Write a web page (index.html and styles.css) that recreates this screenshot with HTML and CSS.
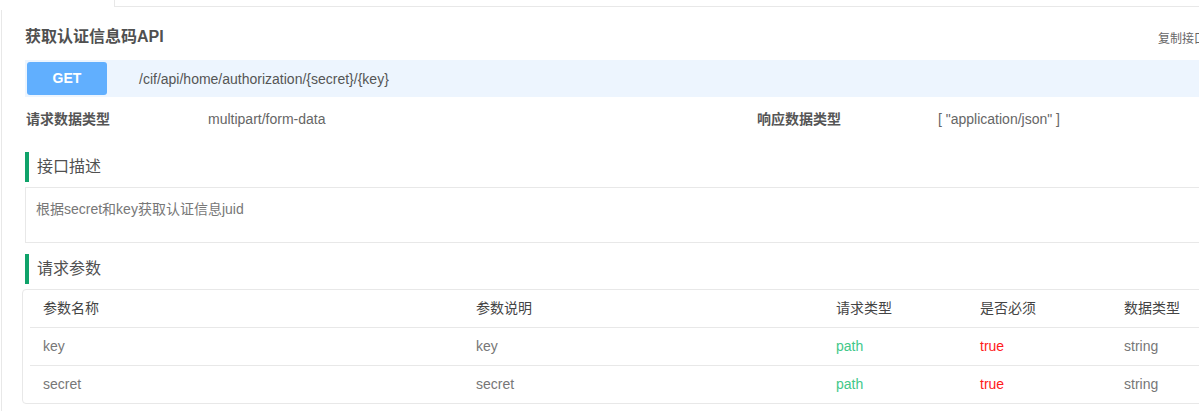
FILE: index.html
```html
<html>
<head>
    <title>获取认证信息码API</title>
    <link rel="stylesheet" href="styles.css">
</head>
<body>
    <div class="tabbar">
        <div class="tab-active"></div>
        <div class="tab-rest"></div>
    </div>

    <div class="content">
        <div class="main">
            <div class="title-row">
                <h2 class="api-title">获取认证信息码API</h2>
                <span class="copy-link">复制接口</span>
            </div>

            <div class="method-bar">
                <span class="method-get">GET</span>
                <span class="api-path">/cif/api/home/authorization/{secret}/{key}</span>
            </div>

            <div class="info-row">
                <span class="info-label">请求数据类型</span>
                <span class="info-value">multipart/form-data</span>
                <span class="info-label">响应数据类型</span>
                <span class="info-value">[ "application/json" ]</span>
            </div>

            <h3 class="section-title">接口描述</h3>
            <div class="desc-box">根据secret和key获取认证信息juid</div>

            <h3 class="section-title">请求参数</h3>
            <div class="param-table">
                <div class="param-row param-head">
                    <span>参数名称</span>
                    <span>参数说明</span>
                    <span>请求类型</span>
                    <span>是否必须</span>
                    <span>数据类型</span>
                </div>
                <div class="param-row">
                    <span>key</span>
                    <span>key</span>
                    <span class="in-path">path</span>
                    <span class="required">true</span>
                    <span>string</span>
                </div>
                <div class="param-row">
                    <span>secret</span>
                    <span>secret</span>
                    <span class="in-path">path</span>
                    <span class="required">true</span>
                    <span>string</span>
                </div>
            </div>
        </div>
    </div>
</body>
</html>
```

FILE: styles.css
```css
body {
    margin: 0;
    overflow: hidden;
    background: #fff;
    font-family: "Liberation Sans", "Noto Sans CJK SC", sans-serif;
    font-size: 14px;
    color: #555;
}
.tabbar {
    display: flex;
    height: 7px;
}
.tab-active {
    width: 114px;
}
.tab-rest {
    flex: 1;
    height: 6px;
    border-left: 1px solid #e8e8e8;
    border-bottom: 1px solid #e8e8e8;
}
.content {
    margin: 3px 0 0 1px;
    border-left: 1px solid #e8e8e8;
    padding: 17px 0 0 23px;
    height: 401px;
    box-sizing: border-box;
}
.main {
    width: 1185px;
}
.title-row {
    display: flex;
    align-items: center;
    height: 20px;
}
.api-title {
    margin: 0;
    font-size: 16px;
    font-weight: bold;
    color: #505050;
    line-height: 20px;
}
.copy-link {
    margin-left: auto;
    padding-right: 4px;
    font-size: 12px;
    color: #666;
}
.method-bar {
    display: flex;
    align-items: center;
    margin-top: 13px;
    padding: 2px;
    background: #edf5fe;
}
.method-get {
    width: 80px;
    height: 33px;
    line-height: 33px;
    text-align: center;
    background: #61affe;
    color: #fff;
    font-weight: bold;
    font-size: 14px;
    border-radius: 3px;
    margin-right: 32px;
}
.api-path {
    color: #555;
}
.info-row {
    display: grid;
    grid-template-columns: 183px 548px 182px 1fr;
    margin-top: 13px;
    line-height: 18px;
}
.info-label {
    font-weight: bold;
    color: #555;
    padding-left: 1px;
}
.info-value {
    color: #666;
}
.section-title {
    margin: 24px 0 0;
    border-left: 4px solid #0fa36a;
    padding-left: 8px;
    height: 30px;
    line-height: 30px;
    font-size: 16px;
    font-weight: normal;
    color: #505050;
}
.desc-box {
    margin-top: 5px;
    border: 1px solid #e8e8e8;
    padding: 12px 10px 24px;
    line-height: 18px;
    color: #777;
}
.desc-box + .section-title {
    margin-top: 11px;
}
.param-table {
    margin: 5px 0 0 -3px;
    border: 1px solid #e8e8e8;
    border-radius: 4px;
    padding-left: 7px;
}
.param-row {
    display: grid;
    grid-template-columns: 433px 360px 144px 144px 1fr;
    padding-left: 13px;
    height: 37px;
    line-height: 37px;
    border-bottom: 1px solid #e8e8e8;
    color: #777;
}
.param-row:last-child {
    border-bottom: none;
}
.param-head {
    color: #444;
}
.in-path {
    color: #42c88a;
}
.required {
    color: #ff1a1a;
}
```
